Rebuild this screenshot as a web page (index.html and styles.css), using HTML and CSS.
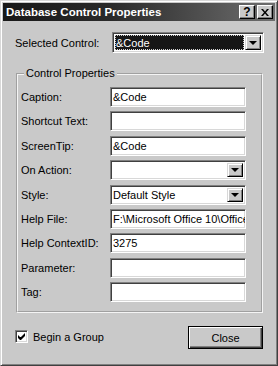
FILE: index.html
```html
<!DOCTYPE html>
<html lang="en">
<head>
    <meta charset="UTF-8">
    <title>Database Control Properties</title>
    <link rel="stylesheet" href="styles.css">
</head>
<body>
    <div class="window">
        <div class="titlebar">
            <span class="title">Database Control Properties</span>
            <div class="title-btns">
                <span class="tbtn help">?</span>
                <span class="tbtn">
                    <svg width="8" height="7" viewBox="0 0 8 7"><path d="M0 0h2l2 2.5 2-2.5h2l-3 3.5 3 3.5h-2l-2-2.5-2 2.5h-2l3-3.5z" fill="#000"/></svg>
                </span>
            </div>
        </div>

        <div class="content">
            <div class="sel-row">
                <span class="sel-label">Selected Control:</span>
                <div class="combo combo-sel">
                    <span class="combo-text"><span class="focus">&amp;Code</span></span>
                    <span class="drop"><i></i></span>
                </div>
            </div>

            <fieldset class="group">
                <legend>Control Properties</legend>
                <div class="rows">
                    <span>Caption:</span>
                    <div class="field">&amp;Code</div>

                    <span>Shortcut Text:</span>
                    <div class="field"></div>

                    <span>ScreenTip:</span>
                    <div class="field">&amp;Code</div>

                    <span>On Action:</span>
                    <div class="field combo"><span class="combo-text"></span><span class="drop"><i></i></span></div>

                    <span>Style:</span>
                    <div class="field combo"><span class="combo-text">Default Style</span><span class="drop"><i></i></span></div>

                    <span>Help File:</span>
                    <div class="field">F:\Microsoft Office 10\Office\1033\VBAOFF10.CHM</div>

                    <span>Help ContextID:</span>
                    <div class="field">3275</div>

                    <span>Parameter:</span>
                    <div class="field"></div>

                    <span>Tag:</span>
                    <div class="field"></div>
                </div>
            </fieldset>

            <div class="bottom">
                <label class="check">
                    <span class="box">
                        <svg width="7" height="7" viewBox="0 0 7 7"><path d="M0 2v3l2 2h1l4-4v-3l-4 4h-1z" fill="#000"/></svg>
                    </span>
                    Begin a Group
                </label>
                <span class="button">Close</span>
            </div>
        </div>
    </div>
</body>
</html>
```

FILE: styles.css
```css
body {
    margin: 0;
    font-family: "Liberation Sans", Arial, sans-serif;
    font-size: 11px;
    color: #000;
}

.window {
    width: 278px;
    height: 366px;
    box-sizing: border-box;
    background: #c9c9c9;
    border: 1px solid;
    border-color: #d8d8d8 #404040 #404040 #d8d8d8;
    box-shadow: inset 1px 1px #ffffff, inset -1px -1px #808080;
    padding: 2px;
}

/* title bar */
.titlebar {
    height: 18px;
    display: flex;
    align-items: center;
    justify-content: space-between;
    padding: 0 2px 0 3px;
    background: linear-gradient(to right, #181818, #2a2a2a 40%, #6e6e6e);
}

.title {
    color: #fff;
    font-weight: bold;
    font-size: 11.5px;
}

.title-btns {
    display: flex;
    gap: 2px;
}

.tbtn {
    width: 16px;
    height: 14px;
    box-sizing: border-box;
    display: flex;
    align-items: center;
    justify-content: center;
    background: #c9c9c9;
    border: 1px solid;
    border-color: #fff #000 #000 #fff;
    box-shadow: inset -1px -1px #808080;
    font-weight: bold;
    font-size: 12px;
}

/* content */
.content {
    padding: 11px 0 0 12px;
}

.sel-row {
    display: flex;
    align-items: center;
}

.sel-label {
    width: 97px;
}

.combo-sel {
    width: 152px;
    height: 21px;
}

.combo {
    display: flex;
    box-sizing: border-box;
    border: 1px solid;
    border-color: #808080 #fff #fff #808080;
    box-shadow: inset 1px 1px #404040, inset -1px -1px #d8d8d8;
    background: #fff;
    padding: 2px;
}

.combo-text {
    flex: 1;
    display: flex;
    align-items: center;
    overflow: hidden;
    white-space: nowrap;
}

.combo-sel .combo-text {
    background: #161616;
    color: #fff;
    margin-right: 1px;
}

.focus {
    flex: 1;
    align-self: stretch;
    display: flex;
    align-items: center;
    border: 1px dotted #d0d0d0;
}

.drop {
    width: 16px;
    box-sizing: border-box;
    display: flex;
    align-items: center;
    justify-content: center;
    background: #c9c9c9;
    border: 1px solid;
    border-color: #d8d8d8 #000 #000 #d8d8d8;
    box-shadow: inset 1px 1px #fff, inset -1px -1px #808080;
}

.drop i {
    width: 0;
    height: 0;
    border-left: 4px solid transparent;
    border-right: 4px solid transparent;
    border-top: 4px solid #000;
}

/* group box */
.group {
    margin: 14px 0 0 1px;
    width: 247px;
    box-sizing: border-box;
    border: 2px groove #f4f4f4;
    padding: 7px 11px 9px 3px;
}

.group legend {
    padding: 0 2px;
    margin-left: 3px;
    line-height: 13px;
}

.rows {
    display: grid;
    grid-template-columns: 89px 136px;
    row-gap: 4.4px;
    align-items: center;
}

.field {
    height: 20px;
    box-sizing: border-box;
    border: 1px solid;
    border-color: #808080 #fff #fff #808080;
    box-shadow: inset 1px 1px #404040, inset -1px -1px #d8d8d8;
    background: #fff;
    padding: 0 0 0 2px;
    line-height: 18px;
    white-space: nowrap;
    overflow: hidden;
}

.field.combo {
    padding: 2px;
}

/* bottom */
.bottom {
    display: flex;
    justify-content: space-between;
    align-items: center;
    margin-top: 13px;
    padding-right: 12px;
}

.check {
    display: flex;
    align-items: center;
    gap: 5px;
    margin-top: -2px;
}

.box {
    width: 13px;
    height: 13px;
    box-sizing: border-box;
    display: flex;
    align-items: center;
    justify-content: center;
    background: #fff;
    border: 1px solid;
    border-color: #808080 #fff #fff #808080;
    box-shadow: inset 1px 1px #404040, inset -1px -1px #d8d8d8;
}

.button {
    width: 75px;
    height: 23px;
    box-sizing: border-box;
    display: flex;
    align-items: center;
    justify-content: center;
    background: #c9c9c9;
    border: 1px solid #000;
    box-shadow: inset 1px 1px #fff, inset -1px -1px #404040, inset -2px -2px #808080;
}
```
